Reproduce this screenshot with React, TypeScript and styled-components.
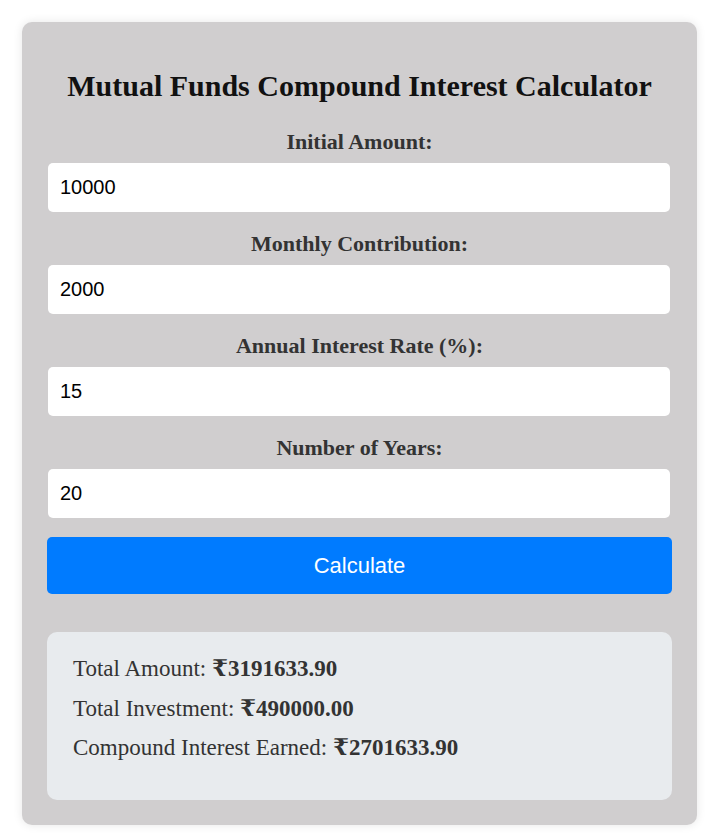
import React from "react";
import styled, { createGlobalStyle } from "styled-components";

const Global = createGlobalStyle`
  html, body { margin: 0; padding: 0; background: #ffffff; }
  body { font-family: "Liberation Serif", "Times New Roman", serif; }
  * { box-sizing: border-box; }
`;

const Page = styled.div`
  padding: 22px 24px 11px 22px;
`;

const Card = styled.div`
  width: 675px;
  background: #d0cecf;
  border-radius: 10px;
  box-shadow: 0 0 10px rgba(0, 0, 0, 0.1);
  padding: 25px;
  display: flex;
  flex-direction: column;
`;

const Title = styled.h2`
  margin: 22px 0 26px;
  font-size: 30px;
  line-height: 34px;
  font-weight: bold;
  text-align: center;
  color: #111;
`;

const Field = styled.div`
  display: flex;
  flex-direction: column;
  margin-bottom: 19px;
`;

const Label = styled.label`
  display: block;
  font-size: 22px;
  line-height: 26px;
  font-weight: bold;
  color: #333;
  text-align: center;
  margin-bottom: 8px;
`;

const Input = styled.input`
  display: block;
  width: calc(100% - 3px);
  margin-left: 1px;
  height: 49px;
  padding: 0 12px;
  border: none;
  border-radius: 5px;
  background: #ffffff;
  font-family: "Liberation Sans", Arial, sans-serif;
  font-size: 20px;
  color: #000;
  outline: none;
`;

const Button = styled.button`
  width: 100%;
  height: 57px;
  border: none;
  border-radius: 5px;
  background: #007bff;
  color: #ffffff;
  font-family: "Liberation Sans", Arial, sans-serif;
  font-size: 22px;
  cursor: pointer;
  margin-bottom: 38px;
`;

const Results = styled.div`
  background: #e8ebee;
  border-radius: 10px;
  padding: 24px 26px 39px;
  display: flex;
  flex-direction: column;
  gap: 13.5px;
`;

const Line = styled.p`
  margin: 0;
  font-size: 23px;
  line-height: 26px;
  color: #333;
  font-family: "Liberation Serif", "DejaVu Serif", serif;
`;

const Amount = styled.strong`
  font-weight: bold;
`;

const fields = [
  { label: "Initial Amount:", value: "10000" },
  { label: "Monthly Contribution:", value: "2000" },
  { label: "Annual Interest Rate (%):", value: "15" },
  { label: "Number of Years:", value: "20" },
];

export default function App() {
  return (
    <>
      <Global />
      <Page>
        <Card>
          <Title>Mutual Funds Compound Interest Calculator</Title>
          {fields.map((f) => (
            <Field key={f.label}>
              <Label>{f.label}</Label>
              <Input type="text" defaultValue={f.value} />
            </Field>
          ))}
          <Button>Calculate</Button>
          <Results>
            <Line>
              Total Amount: <Amount>₹3191633.90</Amount>
            </Line>
            <Line>
              Total Investment: <Amount>₹490000.00</Amount>
            </Line>
            <Line>
              Compound Interest Earned: <Amount>₹2701633.90</Amount>
            </Line>
          </Results>
        </Card>
      </Page>
    </>
  );
}
